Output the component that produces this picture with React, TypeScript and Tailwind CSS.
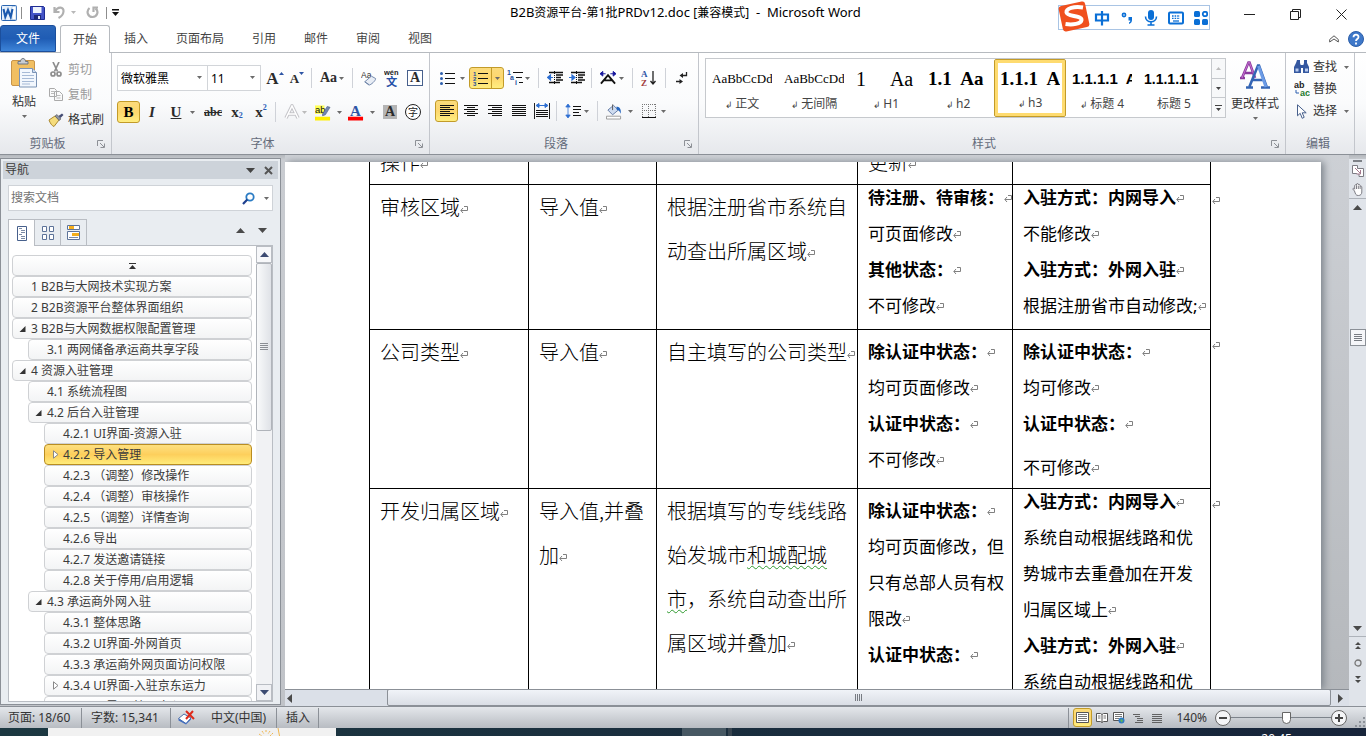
import React from "react";

const UI = "font-['Noto_Sans','Noto_Sans_CJK_SC',sans-serif]";
const SERIF = "font-['Liberation_Serif',serif]";

/* ---------- small shared parts ---------- */

function Caret({ className = "text-[#6b6b6b]" }: { className?: string }) {
  return (
    <svg width="5" height="3" viewBox="0 0 5 3" className={`shrink-0 ${className}`}>
      <path d="M0 0h5L2.500 3z" fill="currentColor" />
    </svg>
  );
}

function Btn({ label, className, children }: { label: string; className: string; children: React.ReactNode }) {
  return (
    <button type="button" aria-label={label} className={`flex shrink-0 items-center justify-center ${className}`}>
      {children}
    </button>
  );
}

function Sep({ className = "" }: { className?: string }) {
  return <span className={`h-5 w-px shrink-0 bg-[#cfd2d8] ${className}`} />;
}

function Group({ label, className, children, launcher = true }: { label: string; className: string; children: React.ReactNode; launcher?: boolean }) {
  return (
    <section aria-label={label} className={`flex flex-col border-r border-[#c3c6cc] ${className}`}>
      <div className="h-[81px]">{children}</div>
      <div className="flex h-5 items-center pr-1 text-[#646b7b]">
        <span className="flex-1 text-center">{label}</span>
        {launcher && (
          <Btn label={`${label}设置`} className="h-3 w-3">
            <svg width="8" height="8" viewBox="0 0 8 8" fill="none" stroke="#8d9096">
              <path d="M.5 6V.5H6M3 3l4 4M7.500 3.500v4h-4" />
            </svg>
          </Btn>
        )}
      </div>
    </section>
  );
}

const ACTIVE = "rounded-[3px] border border-[#c29b29] bg-linear-to-b from-[#fbdb7c] via-[#fdd76e] to-[#ffee80]";

function Rows({ rows, width = 16, color = "#111" }: { rows: [number, number][]; width?: number; color?: string }) {
  return (
    <svg width={width} height="14" viewBox={`0 0 ${width} 14`} shapeRendering="crispEdges">
      {rows.map(([x, w], i) => (
        <rect key={i} x={x} y={1 + i * 2} width={w} height="1" fill={color} />
      ))}
    </svg>
  );
}

/* ---------- title bar ---------- */

function WordLogo() {
  return (
    <svg width="16" height="16" viewBox="0 0 16 16">
      <rect x=".5" y=".5" width="15" height="15" rx="1" fill="#e6f0fb" stroke="#2b66b1" />
      <path d="M11 1.500h4v13h-4z" fill="#fff" stroke="#9bbce3" strokeWidth=".6" />
      <path d="M2.500 4l1.800 8L7 5l2.700 7L11.500 4" fill="none" stroke="#1c5aae" strokeWidth="2.100" />
    </svg>
  );
}

function TitleBar() {
  return (
    <header className="relative flex h-[25px] shrink-0 items-center">
      <div className="flex items-center">
        <span className="pl-px"><WordLogo /></span>
        <span className="ml-1 h-3 w-px bg-[#8d8d8d]" />
        <Btn label="保存" className="ml-[7px] h-4 w-4">
          <svg width="15" height="14" viewBox="0 0 15 14">
            <path d="M.5.5h13l1 1v12H.5z" fill="#4454c7" stroke="#1f2c92" />
            <path d="M3 1h8.500v6H3z" fill="#eef3fd" />
            <path d="M4 9h7v4.500H4z" fill="#1d2875" />
            <path d="M8 10h2v3H8z" fill="#dfe4f5" />
          </svg>
        </Btn>
        <Btn label="撤消" className="ml-2 h-4 w-3">
          <svg width="12" height="13" viewBox="0 0 12 13" fill="none" stroke="#b0b0b0" strokeWidth="2.200">
            <path d="M1.500 1v5h5M2 5.500C5-.5 11 1 10.500 5.500c-.3 3-2 5-5 6.500" />
          </svg>
        </Btn>
        <span className="ml-[6px]"><Caret className="text-[#b8b8b8]" /></span>
        <Btn label="重复" className="ml-2 h-4 w-4">
          <svg width="13" height="13" viewBox="0 0 13 13" fill="none" stroke="#b0b0b0" strokeWidth="2.200">
            <path d="M3.500 2C0 5 1.500 11 6.500 11S13 5 9.500 2.500M7.500 6V1.500H12" />
          </svg>
        </Btn>
        <span className="ml-1.5 h-3 w-px bg-[#8d8d8d]" />
        <Btn label="自定义快速访问工具栏" className="ml-1 h-4 w-2">
          <svg width="7" height="7" viewBox="0 0 7 7"><path d="M0 0h7v1.500H0zM0 3h7L3.500 7z" fill="#111" /></svg>
        </Btn>
      </div>
      <h1 className="flex-1 whitespace-pre pl-[391px] text-[13px] text-black">
        B2B<span className="text-xs">资源平台</span>-<span className="text-xs">第1批</span>PRDv12.doc <span className="text-xs">[兼容模式]</span>  -  Microsoft Word
      </h1>
      <div className="absolute top-[5px] right-[156px] flex h-[25px] w-[152px] items-center border border-[#a9c4e4] bg-white pl-[35px] text-[#0a6fd6]">
        <svg className="absolute -top-[5px] -left-px" width="32" height="31" viewBox="0 0 32 31">
          <rect x="2.500" y="2.500" width="27" height="26" rx="3" fill="#f0501e" transform="rotate(-12 16 15.500)" />
          <path d="M25 6.500C16 5 8 7.500 8.500 11.500c.5 4 15.500 3 15 7.500-.4 4-9 5-16 4" fill="none" stroke="#fff" strokeWidth="4" />
        </svg>
        <svg width="16" height="16" viewBox="0 0 16 16" fill="none" stroke="currentColor" strokeWidth="2.200"><path d="M2 4.500h12v6H2zM8 1v14.500" /></svg>
        <svg className="ml-2.5" width="14" height="14" viewBox="0 0 14 14" fill="currentColor"><circle cx="4" cy="4" r="1.600" fill="none" stroke="currentColor" strokeWidth="1.600" /><path d="M8.500 6h3.500v3c0 2-1 3-3 4v-1.500c1-.6 1.300-1 1.300-2H8.500z" /></svg>
        <svg className="ml-2.5" width="14" height="16" viewBox="0 0 14 16" fill="currentColor"><rect x="4" y="0" width="6" height="10" rx="3" /><path d="M1.500 6.500c0 7 11 7 11 0M7 11v4M3.500 15h7" fill="none" stroke="currentColor" strokeWidth="1.600" /></svg>
        <svg className="ml-2.5" width="16" height="14" viewBox="0 0 16 14" fill="none" stroke="currentColor"><rect x="1" y="1.500" width="14" height="11" rx="1" strokeWidth="2" /><path d="M4 5h8M4 7.300h8" strokeWidth="1.300" strokeDasharray="1.600 1" /><path d="M5 10h6" strokeWidth="1.300" /></svg>
        <svg className="ml-2.5" width="14" height="14" viewBox="0 0 14 14" fill="currentColor"><rect width="6" height="6" rx="1.500" /><rect y="8" width="6" height="6" rx="1.500" /><rect x="8" y="8" width="6" height="6" rx="1.500" /><rect x="8.800" y=".8" width="4.400" height="4.400" rx="2" fill="none" stroke="currentColor" strokeWidth="1.800" /></svg>
      </div>
      <Btn label="最小化" className="mt-1 h-5 w-[46px]"><svg width="11" height="11" viewBox="0 0 11 11"><path d="M0 5.500h11" stroke="#222" /></svg></Btn>
      <Btn label="还原" className="mt-1 h-5 w-[46px]"><svg width="11" height="11" viewBox="0 0 11 11" fill="none" stroke="#222"><path d="M.5 2.500h8v8h-8zM2.500 2.500v-2h8v8h-2" /></svg></Btn>
      <Btn label="关闭" className="mt-1 mr-[2px] h-5 w-[46px]"><svg width="11" height="11" viewBox="0 0 11 11" stroke="#222"><path d="M.5.5l10 10M10.500.5l-10 10" /></svg></Btn>
    </header>
  );
}

function TabBar() {
  return (
    <nav aria-label="功能区" className="flex h-7 shrink-0 items-stretch border-b border-[#b6babf] text-[#444]">
      <button type="button" className="w-14 rounded-t-[3px] border border-[#1c4f9c] bg-linear-to-b from-[#2a66b9] via-[#1f5cb4] to-[#3d84d8] text-white">文件</button>
      <button type="button" className="relative -mb-px ml-1 rounded-t-[3px] border border-b-0 border-[#b6babf] bg-white px-3">开始</button>
      {["插入", "页面布局", "引用", "邮件", "审阅", "视图"].map((t) => (
        <button type="button" key={t} className="px-3.5">{t}</button>
      ))}
      <span className="flex-1" />
      <Btn label="折叠功能区" className="w-5"><svg width="10" height="8" viewBox="0 0 10 8" fill="#fff" stroke="#555"><path d="M5 .8L9.300 4.500v2.500L5 4 .7 7V4.500z" /></svg></Btn>
      <Btn label="帮助" className="mr-0.5 ml-1 w-4">
        <svg width="16" height="16" viewBox="0 0 16 16"><circle cx="8" cy="8" r="7.500" fill="#3e78c9" stroke="#2c5ea8" /><path d="M5.500 6.200c0-3.300 5-3.200 5-.3C10.500 8 8 8 8 10M8 11.500v2" fill="none" stroke="#fff" strokeWidth="1.800" /></svg>
      </Btn>
    </nav>
  );
}

/* ---------- ribbon ---------- */

function ClipboardGroup() {
  return (
    <Group label="剪贴板" className="w-28">
      <div className="flex">
        <button type="button" className="flex w-12 flex-col items-center pt-1 text-[#333]">
          <svg width="28" height="32" viewBox="0 0 28 32">
            <rect x="1.500" y="3.500" width="23" height="25" rx="1.500" fill="#f1bf62" stroke="#c8954a" />
            <path d="M8 7V4.500h2.500C10.500.5 15.500.5 15.500 4.500H18V7z" fill="#c9cdd3" stroke="#6f7680" />
            <path d="M9.500 11.500h13l4 4v14.500h-17z" fill="#f2f7fd" stroke="#7b93b5" />
            <path d="M22.500 11.500v4h4" fill="#c9daf0" stroke="#7b93b5" />
            <path d="M12 15.500h8M12 18.500h12M12 21.500h12M12 24.500h12M12 27h8" stroke="#a6bad6" />
          </svg>
          <span className="mt-1 leading-[18px]">粘贴</span>
          <span className="mt-1"><Caret /></span>
        </button>
        <div className="flex flex-col pt-1 text-[#9a9a9a]">
          <button type="button" className="flex h-[25px] items-center gap-1">
            <svg width="16" height="15" viewBox="0 0 16 15" fill="none" stroke="#8d8d8d" strokeWidth="1.700"><path d="M5 0l4.500 9.500M11 0L6.500 9.500" /><circle cx="5" cy="12" r="2" /><circle cx="11" cy="12" r="2" /></svg>
            剪切
          </button>
          <button type="button" className="flex h-[25px] items-center gap-1">
            <svg width="16" height="13" viewBox="0 0 16 13" fill="#fafafa" stroke="#aaa"><path d="M1.500.5h5l2 2v6h-7zM6.500 3.500h5l3 3v6h-8z" /><path d="M3 3.500h3M3 5.500h3M8.500 7.500h4M8.500 10h4" stroke="#bbb" /></svg>
            复制
          </button>
          <button type="button" className="flex h-[25px] items-center gap-1 text-[#333]">
            <svg width="16" height="14" viewBox="0 0 16 14"><path d="M1 7l6-4 4 4-5 6.500C4 13 2 10 1 7z" fill="#f5dc7c" stroke="#a98830" /><path d="M7 3l2-1.500 4 4.500-2 1.500z" fill="#8b93a5" stroke="#555" strokeWidth=".6" /><path d="M10.500 3L14 .5 15.500 2l-3 3z" fill="#444c74" /></svg>
            格式刷
          </button>
        </div>
      </div>
    </Group>
  );
}

function FontGroup() {
  const glyph = `${SERIF} font-bold leading-none text-[#2b2b2b]`;
  return (
    <Group label="字体" className="w-[318px]">
      <div className="flex h-[38px] items-end pl-[5px]">
        <div className="relative h-[26px] w-[91px]">
          <input aria-label="字体名称" defaultValue="微软雅黑" className="h-full w-full border border-[#d2d5d9] bg-white pl-[3px] text-black" />
          <span className="pointer-events-none absolute top-[11px] right-1.5"><Caret /></span>
        </div>
        <div className="relative -ml-px h-[26px] w-[54px]">
          <input aria-label="字号" defaultValue="11" className="h-full w-full border border-[#d2d5d9] bg-white pl-[3px] text-black" />
          <span className="pointer-events-none absolute top-[11px] right-1.5"><Caret /></span>
        </div>
        <div className="flex h-[26px] items-center">
          <Btn label="增大字体" className={`ml-1 h-6 w-5 text-[17px] ${glyph}`}>A<svg className="mb-2.5" width="5" height="3" viewBox="0 0 5 3"><path d="M0 3h5L2.500 0z" fill="#2d55a5" /></svg></Btn>
          <Btn label="缩小字体" className={`ml-1 h-6 w-4 text-[13px] ${glyph}`}>A<svg className="mb-2.5" width="5" height="3" viewBox="0 0 5 3"><path d="M0 0h5L2.500 3z" fill="#2d55a5" /></svg></Btn>
          <Sep className="ml-1.5" />
          <Btn label="更改大小写" className={`ml-2 h-6 w-6 gap-0.5 text-[14px] ${glyph}`}>Aa<Caret /></Btn>
          <Sep className="ml-2" />
          <Btn label="清除格式" className="ml-2 h-6 w-4">
            <svg width="17" height="17" viewBox="0 0 17 17"><text x="0" y="8" fontSize="9" fontFamily="Liberation Sans" fill="#333">Aa</text><path d="M4 12l7-6 4.500 2.500c.5 2-5 7-7 7z" fill="#e8edf5" stroke="#6d83a8" /><path d="M4 12l4.500 3" stroke="#6d83a8" /></svg>
          </Btn>
          <Btn label="拼音指南" className="ml-[7px] h-6 w-4">
            <svg width="17" height="18" viewBox="0 0 17 18"><text x="0" y="6" fontSize="8" fontWeight="bold" fontFamily="Liberation Sans" fill="#222">wén</text><text x="2" y="17" fontSize="12" fontWeight="bold" fontFamily="Noto Sans CJK SC" fill="#2450a8">文</text></svg>
          </Btn>
          <Btn label="字符边框" className={`ml-[7px] h-4 w-4 border border-[#47608c] bg-white text-[14px] ${glyph}`}>A</Btn>
        </div>
      </div>
      <div className="flex h-[38px] items-center pl-[5px] pt-1">
        <Btn label="加粗" className={`h-[22px] w-[23px] text-[15px] ${ACTIVE} ${SERIF} font-bold leading-none text-black`}>B</Btn>
        <Btn label="倾斜" className={`ml-1 h-5 w-4 text-[15px] italic ${glyph}`}>I</Btn>
        <Btn label="下划线" className={`ml-1.5 h-5 w-5 text-[15px] underline ${glyph}`}>U</Btn>
        <span className="ml-1"><Caret /></span>
        <Btn label="删除线" className={`ml-2 h-5 w-5 text-[12px] line-through ${glyph}`}>abc</Btn>
        <Btn label="下标" className={`ml-1 h-5 w-5 text-[15px] ${glyph}`}>x<span className="mt-2 text-[8px] leading-none text-[#2a5cb8]">2</span></Btn>
        <Btn label="上标" className={`ml-1 h-5 w-5 text-[15px] ${glyph}`}>x<span className="mb-2 text-[8px] leading-none text-[#2a5cb8]">2</span></Btn>
        <Sep className="ml-1" />
        <Btn label="文本效果" className="ml-2 h-5 w-4"><svg width="16" height="16" viewBox="0 0 16 16"><path d="M2 14L8 2l6 12M4.500 10h7" fill="none" stroke="#c4c4c8" strokeWidth="3.500" /><path d="M2 14L8 2l6 12M4.500 10h7" fill="none" stroke="#fff" strokeWidth="1.500" /></svg></Btn>
        <span className="ml-0.5"><Caret className="text-[#bbb]" /></span>
        <Btn label="突出显示" className="ml-2 h-5 w-4"><svg width="17" height="17" viewBox="0 0 17 17"><path d="M0 1h10v9H0z" fill="#ffff55" /><text x="0" y="9" fontSize="10" fontFamily="Liberation Sans" fill="#111">ab</text><path d="M8 10l5-8 3 1-5 8-3 1z" fill="#7186b3" stroke="#44557c" strokeWidth=".6" /><path d="M0 13h16v4H0z" fill="#ffee00" /></svg></Btn>
        <span className="ml-1.5"><Caret /></span>
        <Btn label="字体颜色" className="ml-1.5 h-5 w-4"><svg width="17" height="17" viewBox="0 0 17 17"><text x="2" y="12" fontSize="16" fontWeight="bold" fontFamily="Liberation Serif" fill="#2d55a5">A</text><path d="M0 13h16v4H0z" fill="#f00" /></svg></Btn>
        <span className="ml-1.5"><Caret /></span>
        <Btn label="字符底纹" className={`ml-2 h-3.5 w-3.5 bg-[#b5b5b5] text-[14px] ${glyph}`}>A</Btn>
        <Btn label="带圈字符" className="ml-2 h-4 w-4 rounded-full border border-[#222] bg-white text-[10px] leading-none text-[#222]">字</Btn>
      </div>
    </Group>
  );
}

function ListIcon({ kind }: { kind: "bullet" | "number" }) {
  return (
    <svg width="15" height="15" viewBox="0 0 15 15">
      <path d="M5 2.500h10M5 7.500h10M5 12.500h10" stroke="#111" shapeRendering="crispEdges" />
      {kind === "bullet"
        ? [2.5, 7.5, 12.5].map((y) => <circle key={y} cx="1.500" cy={y} r="1.500" fill="#2d5fae" />)
        : [4.5, 9.5, 14.5].map((y, i) => <text key={y} x="0" y={y} fontSize="6" fontWeight="bold" fontFamily="Liberation Sans" fill="#24509c">{i + 1}</text>)}
    </svg>
  );
}

function IndentIcon({ out }: { out?: boolean }) {
  return (
    <svg width="16" height="14" viewBox="0 0 16 14">
      <path d="M2 1.500h14M9 4h7M9 6.500h5M9 9h7M2 11.500h11" stroke="#111" strokeWidth="1.300" />
      <path d="M7.500 0v14" stroke="#111" strokeDasharray="1 1" />
      <path d={out ? "M.5 6.500L3.500 4v5zM3 6.500h3" : "M6 6.500L3 4v5zM0 6.500h4"} fill="#2d6fd2" stroke="#2d6fd2" strokeWidth="1.200" />
    </svg>
  );
}

function ParagraphGroup() {
  const full: [number, number] = [1, 14];
  return (
    <Group label="段落" className="w-[269px]">
      <div className="flex h-[37px] items-end pl-1">
        <div className="flex h-6 items-center">
          <Btn label="项目符号" className="ml-[3px] h-5 w-5"><ListIcon kind="bullet" /></Btn>
          <span className="ml-[3px]"><Caret /></span>
          <div className={`ml-1 flex h-[22px] w-[35px] items-center ${ACTIVE}`}>
            <Btn label="编号" className="h-full w-[22px] border-r border-[#c29b29]"><ListIcon kind="number" /></Btn>
            <Btn label="编号库" className="h-full w-[11px]"><Caret /></Btn>
          </div>
          <Btn label="多级列表" className="ml-[3px] h-5 w-4"><svg width="16" height="16" viewBox="0 0 16 16"><path d="M6 2.500h10M9 7.500h6M12 12.500h4" stroke="#111" /><g fontSize="7" fontWeight="bold" fontFamily="Liberation Sans" fill="#24509c"><text x="0" y="5">1</text><text x="3" y="10">a</text><text x="8" y="15">i</text></g></svg></Btn>
          <span className="ml-0.5"><Caret /></span>
          <Sep className="ml-2" />
          <Btn label="减少缩进量" className="ml-2 h-5 w-4"><IndentIcon out /></Btn>
          <Btn label="增加缩进量" className="ml-1.5 h-5 w-4"><IndentIcon /></Btn>
          <Sep className="ml-1.5" />
          <Btn label="中文版式" className="ml-2 h-5 w-4"><svg width="17" height="14" viewBox="0 0 17 14"><path d="M1 13L8.500 4l7.500 9M4.500 9.500h8" fill="none" stroke="#111" strokeWidth="2" /><path d="M0 2.500L3 0v5zM17 2.500L14 0v5zM2 2.500h4M11 2.500h4" fill="#14149c" stroke="#14149c" /></svg></Btn>
          <span className="ml-[3px]"><Caret /></span>
          <Sep className="ml-2" />
          <Btn label="排序" className="ml-2 h-5 w-4"><svg width="16" height="17" viewBox="0 0 16 17"><g fontSize="9" fontWeight="bold" fontFamily="Liberation Serif"><text x="0" y="7" fill="#2d55a5">A</text><text x="0" y="16" fill="#a23c3c">Z</text></g><path d="M12 1v13M9.500 11l2.500 3 2.500-3" fill="none" stroke="#222" strokeWidth="1.300" /></svg></Btn>
          <Sep className="ml-2" />
          <Btn label="显示编辑标记" className="ml-2 h-5 w-4"><svg width="12" height="14" viewBox="0 0 12 14"><path d="M10.500 1v3.500H6M0 10.500h4" fill="none" stroke="#222" strokeWidth="1.300" /><path d="M3.500 4.500L7 2v5zM7 10.500L3.500 8v5z" fill="#222" /></svg></Btn>
        </div>
      </div>
      <div className="flex h-10 items-center pl-[5px] pt-0.5">
        <Btn label="左对齐" className={`h-[22px] w-[23px] ${ACTIVE}`}><Rows rows={[[1, 14], [1, 10], [1, 14], [1, 10], [1, 14], [1, 10]]} /></Btn>
        <Btn label="居中" className="ml-[3px] h-5 w-5"><Rows rows={[full, [4, 8], full, [4, 8], full, [4, 8]]} /></Btn>
        <Btn label="右对齐" className="ml-1 h-5 w-5"><Rows rows={[full, [5, 10], full, [5, 10], full, [5, 10]]} /></Btn>
        <Btn label="两端对齐" className="ml-1 h-5 w-5"><Rows rows={[full, full, full, full, full, full]} /></Btn>
        <Btn label="分散对齐" className="ml-[3px] h-5 w-5"><svg width="16" height="16" viewBox="0 0 16 16"><path d="M.5 0v16M15.500 0v16" stroke="#222" /><path d="M3 2.500h10M2 2.500L5 .5v4zM14 2.500L11 .5v4z" fill="#2d6fd2" stroke="#2d6fd2" /><path d="M2 7.500h12M2 9.500h12M2 11.500h12M2 13.500h12" stroke="#111" /></svg></Btn>
        <Sep className="ml-1" />
        <Btn label="行距" className="ml-2 h-5 w-4"><svg width="16" height="16" viewBox="0 0 16 16"><path d="M3 2v12M3 1L.8 4h4.400zM3 15l-2.200-3h4.400z" fill="#2d6fd2" stroke="#2d6fd2" strokeWidth=".8" /><path d="M8 3.500h8M8 6.500h8M8 9.500h6M8 12.500h8" stroke="#111" /></svg></Btn>
        <span className="ml-[3px]"><Caret /></span>
        <Sep className="ml-2" />
        <Btn label="底纹" className="ml-2 h-5 w-4"><svg width="17" height="17" viewBox="0 0 17 17"><path d="M2 7l6-5 5 5-6 5z" fill="#cfdcf0" stroke="#6079a3" /><path d="M7 1v6" stroke="#555" /><path d="M11 3.500c4-1 5.500 4 4.500 7.500-1-3-2-4-4-4z" fill="#2566c0" /><path d="M.5 13.500h15v3H.5z" fill="#fff" stroke="#999" /></svg></Btn>
        <span className="ml-1.5"><Caret /></span>
        <Btn label="边框" className="ml-2 h-5 w-4"><svg width="14" height="14" viewBox="0 0 14 14" shapeRendering="crispEdges"><path d="M.5 0v13M13.500 0v13M6.500 0v13M0 .5h14M0 6.500h14" stroke="#777" strokeDasharray="1 1" /><path d="M0 13.500h14" stroke="#111" /></svg></Btn>
        <span className="ml-1"><Caret /></span>
      </div>
    </Group>
  );
}

function StyleItem({ sample, name, font, mark = true, active }: { sample: string; name: string; font: string; mark?: boolean; active?: boolean }) {
  return (
    <button type="button" className={`flex h-full w-18 shrink-0 flex-col items-stretch text-[#444] ${active ? "rounded-[2px] border border-[#c29b29] bg-white shadow-[inset_0_0_0_3px_#fedb70]" : ""}`}>
      <span className={`overflow-hidden whitespace-pre text-left leading-[26px] text-black ${font} ${active ? "mx-[5px] mt-[6px]" : "mx-1.5 mt-[7px]"}`}>{sample}</span>
      <span className="text-center leading-6">{mark && <span className="text-[9px]">↲ </span>}{name}</span>
    </button>
  );
}

function StylesGroup() {
  return (
    <Group label="样式" className="w-[587px]">
      <div className="flex pl-[6px]">
        <div className="mt-[5px] flex h-[60px] w-[521px] border border-[#c6c9cd] bg-white">
          <div className="flex flex-1 overflow-hidden">
            <StyleItem sample="AaBbCcDd" name="正文" font={`${SERIF} text-[13px]`} />
            <StyleItem sample="AaBbCcDd" name="无间隔" font={`${SERIF} text-[13px]`} />
            <StyleItem sample="1     Aa" name="H1" font={`${SERIF} text-[20px]`} />
            <StyleItem sample="1.1  Aa" name="h2" font={`${SERIF} text-[19px] font-bold`} />
            <StyleItem sample="1.1.1  Aa" name="h3" font={`${SERIF} text-[19px] font-bold`} active />
            <StyleItem sample="1.1.1.1  Aa" name="标题 4" font="font-['Liberation_Sans',sans-serif] text-[15px] font-bold" />
            <StyleItem sample="1.1.1.1.1" name="标题 5" font="font-['Liberation_Sans',sans-serif] text-[14px] font-bold" mark={false} />
          </div>
          <div className="flex w-[14px] flex-col divide-y divide-[#c6c9cd] border-l border-[#c6c9cd] bg-[#f7f8f9]">
            <Btn label="上一行" className="flex-1"><span className="rotate-180"><Caret className="text-[#bbb]" /></span></Btn>
            <Btn label="下一行" className="flex-1"><Caret className="text-[#444]" /></Btn>
            <Btn label="其他" className="flex-1"><svg width="7" height="6" viewBox="0 0 7 6"><path d="M0 0h7v1H0zM1 3h5L3.500 6z" fill="#444" /></svg></Btn>
          </div>
        </div>
        <button type="button" className="flex w-[58px] flex-col items-center pt-[7px] text-[#333]">
          <svg width="30" height="30" viewBox="0 0 30 30" fill="none">
            <path d="M2 18L8.500 2.500h1L15 18M4.500 13h9M0 18h5" stroke="#8b3a9e" strokeWidth="2.600" />
            <path d="M2 18L8.500 2.500h1L15 18" stroke="#c56fd0" strokeWidth="1" />
            <path d="M9.500 26.500L18 5.500h1l7.500 21M12.500 20h12M6 27.500h7M21 27.500h9" stroke="#3364b4" strokeWidth="2.600" />
            <path d="M18.500 6l7.500 21" stroke="#6b9be6" strokeWidth="3" />
          </svg>
          <span className="mt-[5px] leading-[18px]">更改样式</span>
          <span className="mt-1"><Caret /></span>
        </button>
      </div>
    </Group>
  );
}

function EditGroup() {
  return (
    <Group label="编辑" className="w-[69px]" launcher={false}>
      <div className="flex flex-col pt-[3px] pl-2 text-[#333]">
        <button type="button" className="flex h-[22px] items-center gap-[3px] whitespace-nowrap">
          <svg width="16" height="14" viewBox="0 0 16 14" fill="#3558a0"><path d="M3 0h3v3l1 3v7H0V7l2-4zM10 0h3v3l2 4v6H9V6l1-3zM6.500 5h3v3h-3z" /><path d="M1.500 8.500h3v3h-3zM11 8.500h3v3h-3z" fill="#b9cbee" /></svg>
          查找<span className="ml-1"><Caret /></span>
        </button>
        <button type="button" className="flex h-[22px] items-center gap-[3px]">
          <svg width="16" height="16" viewBox="0 0 16 16" fontFamily="Liberation Sans" fontWeight="bold"><text x="0" y="7" fontSize="9" fill="#222">ab</text><text x="6" y="15" fontSize="9" fill="#1e7a2c">ac</text><path d="M2 9v3h3" fill="none" stroke="#2d5fae" /></svg>
          替换
        </button>
        <button type="button" className="flex h-[22px] items-center gap-[3px] whitespace-nowrap">
          <svg width="16" height="15" viewBox="0 0 16 15"><path d="M3.500.8v11l2.700-2.500 2 5 2-1-2-4.500h4z" fill="#fff" stroke="#47608c" /></svg>
          选择<span className="ml-1"><Caret /></span>
        </button>
      </div>
    </Group>
  );
}

/* ---------- navigation pane ---------- */

type Node = { text: string; level: 0 | 1 | 2; open?: boolean; closed?: boolean; selected?: boolean };

const NODES: Node[] = [
  { text: "1 B2B与大网技术实现方案", level: 0 },
  { text: "2 B2B资源平台整体界面组织", level: 0 },
  { text: "3 B2B与大网数据权限配置管理", level: 0, open: true },
  { text: "3.1 两网储备承运商共享字段", level: 1 },
  { text: "4 资源入驻管理", level: 0, open: true },
  { text: "4.1 系统流程图", level: 1 },
  { text: "4.2 后台入驻管理", level: 1, open: true },
  { text: "4.2.1 UI界面-资源入驻", level: 2 },
  { text: "4.2.2 导入管理", level: 2, closed: true, selected: true },
  { text: "4.2.3 （调整）修改操作", level: 2 },
  { text: "4.2.4 （调整）审核操作", level: 2 },
  { text: "4.2.5 （调整）详情查询", level: 2 },
  { text: "4.2.6 导出", level: 2 },
  { text: "4.2.7 发送邀请链接", level: 2 },
  { text: "4.2.8 关于停用/启用逻辑", level: 2 },
  { text: "4.3 承运商外网入驻", level: 1, open: true },
  { text: "4.3.1 整体思路", level: 2 },
  { text: "4.3.2 UI界面-外网首页", level: 2 },
  { text: "4.3.3 承运商外网页面访问权限", level: 2 },
  { text: "4.3.4 UI界面-入驻京东运力", level: 2, closed: true },
  { text: "4.3.5 UI界面-管理中心", level: 2 },
];

const INDENT = ["ml-0", "ml-4", "ml-8"];

function NavPane() {
  return (
    <aside className="flex w-[281px] shrink-0 flex-col border border-[#8b9097] bg-[#e9edf1] px-0.5 pt-0.5 pb-0.5 text-[#3b3b3b]">
      <div className="flex h-[18px] shrink-0 items-center bg-[#cdd3da] pl-0.5">
        <h2 className="flex-1">导航</h2>
        <Btn label="窗格选项" className="h-4 w-4"><svg width="9" height="5" viewBox="0 0 9 5"><path d="M0 0h9L4.500 5z" fill="#444" /></svg></Btn>
        <Btn label="关闭窗格" className="h-4 w-5"><svg width="9" height="9" viewBox="0 0 9 9"><path d="M1 1l7 7M8 1L1 8" stroke="#555" strokeWidth="2" /></svg></Btn>
      </div>
      <div className="mx-[5px] mt-1.5 flex h-[26px] shrink-0 items-center border border-[#cfd3d8] bg-white">
        <input aria-label="搜索文档" placeholder="搜索文档" className="min-w-0 flex-1 pl-0.5 placeholder:text-[#737373]" />
        <Btn label="搜索" className="mr-1 h-5 w-4"><svg width="13" height="13" viewBox="0 0 13 13" fill="none"><circle cx="8" cy="5" r="3.700" stroke="#2b7cc4" strokeWidth="1.800" /><path d="M5.300 7.500L1 12" stroke="#1e3f8e" strokeWidth="2.200" /></svg></Btn>
        <Btn label="搜索选项" className="h-5 w-3"><Caret /></Btn>
      </div>
      <div className="mx-[5px] mt-2 flex h-[26px] shrink-0 items-stretch">
        <Btn label="浏览标题" className="relative z-10 -mb-px w-[27px] border border-b-0 border-[#b9bdc3] bg-white"><svg width="10" height="15" viewBox="0 0 10 15"><path d="M.5.5h9v14h-9z" fill="#fff" stroke="#47608c" /><path d="M2 2.500h3M4 4.500h4M4 6.500h4M2 8.500h3M4 10.500h4M4 12.500h4" stroke="#7b8aa5" /></svg></Btn>
        <Btn label="浏览页面" className="w-[26px] border-t border-r border-[#b9bdc3]"><svg width="12" height="14" viewBox="0 0 12 14" fill="#fff" stroke="#5d7399"><path d="M.5.5h4v5h-4zM7.500.5h4v5h-4zM.5 8.500h4v5h-4zM7.500 8.500h4v5h-4z" /></svg></Btn>
        <Btn label="浏览搜索结果" className="w-[26px] border-t border-r border-[#b9bdc3]"><svg width="13" height="15" viewBox="0 0 13 15"><path d="M.5.500h12v4h-12zM.5 6.500h12v8h-12z" fill="#fff" stroke="#5d7399" /><path d="M2 1h5v3H2zM5 8h7v3H5z" fill="#f5ae1c" /><path d="M2 12.500h9" stroke="#7b8aa5" /></svg></Btn>
        <span className="flex-1" />
        <Btn label="上一标题" className="w-[22px] pb-1"><svg width="9" height="5" viewBox="0 0 9 5"><path d="M0 5h9L4.500 0z" fill="#4a4a4a" /></svg></Btn>
        <Btn label="下一标题" className="w-[22px] pb-1"><svg width="9" height="5" viewBox="0 0 9 5"><path d="M0 0h9L4.500 5z" fill="#4a4a4a" /></svg></Btn>
      </div>
      <div className="mx-[5px] flex min-h-0 flex-1 border border-[#b9bdc3] bg-white">
        <ul className="min-w-0 flex-1 overflow-hidden pt-[9px] pr-1 pl-[3px]">
          <li>
            <button type="button" aria-label="文档开头" className="flex h-[21px] w-full items-center justify-center rounded-[4px] border border-[#cfd1d4] bg-linear-to-b from-white to-[#f3f4f5]">
              <svg width="7" height="6" viewBox="0 0 7 6"><path d="M0 0h7v1H0zM0 6h7L3.500 2z" fill="#333" /></svg>
            </button>
          </li>
          {NODES.map((n) => (
            <li key={n.text} className={INDENT[n.level]}>
              <button type="button" className={`flex h-[21px] w-full items-center overflow-hidden rounded-[4px] border pl-1.5 whitespace-nowrap ${n.selected ? "border-[#b98d22] bg-linear-to-b from-[#fde080] via-[#fdcf5c] to-[#ffec7a]" : "border-[#cfd1d4] bg-linear-to-b from-white to-[#f3f4f5]"}`}>
                <span className="w-3 shrink-0">
                  {n.open && <svg width="7" height="6" viewBox="0 0 7 6"><path d="M6.500 0v6h-6z" fill="#333" /></svg>}
                  {n.closed && <svg className="ml-0.5" width="6" height="9" viewBox="0 0 6 9"><path d="M.5.800v7.400L5 4.500z" fill="#fff" stroke="#888" /></svg>}
                </span>
                {n.text}
              </button>
            </li>
          ))}
        </ul>
        <div className="flex w-4 shrink-0 flex-col bg-[#f1f2f4]">
          <Btn label="向上滚动" className="h-[17px] border border-[#b9bdc3] bg-[#f7f8fa]"><svg width="9" height="5" viewBox="0 0 9 5"><path d="M0 5h9L4.500 0z" fill="#3c4b72" /></svg></Btn>
          <div className="flex h-[168px] items-center justify-center rounded-[2px] border border-[#b0b4ba] bg-linear-to-r from-[#f9fafb] to-[#dfe2e7]">
            <svg width="8" height="8" viewBox="0 0 8 8"><path d="M0 .5h8M0 2.500h8M0 4.500h8M0 6.500h8" stroke="#8a8e94" /></svg>
          </div>
          <span className="flex-1" />
          <Btn label="向下滚动" className="h-[17px] border border-[#b9bdc3] bg-[#f0f1f4]"><svg width="9" height="5" viewBox="0 0 9 5"><path d="M0 0h9L4.500 5z" fill="#3c4b72" /></svg></Btn>
        </div>
      </div>
    </aside>
  );
}

/* ---------- document ---------- */

function Ret() {
  return (
    <svg className="inline-block" width="8" height="8" viewBox="0 0 8 8" fill="none" stroke="#808080">
      <path d="M4 .5h3.500v4H1M3 2L.800 4.500 3 7" />
    </svg>
  );
}

function Main({ lines }: { lines: React.ReactNode[] }) {
  return (
    <div className="font-['Noto_Sans_CJK_SC',sans-serif] text-[20px] leading-[44px] font-light">
      {lines.map((l, i) => (
        <p key={i}>{l}{i === lines.length - 1 && <Ret />}</p>
      ))}
    </div>
  );
}

type Line = { t: string; b?: boolean; wrap?: boolean; gap?: boolean };

function Notes({ lines, up }: { lines: Line[]; up?: boolean }) {
  return (
    <div className={`text-[17px] leading-9 ${up ? "-mt-[5px]" : "mt-1"}`}>
      {lines.map((l, i) => (
        <p key={i} className={`${l.b ? "font-bold" : ""} ${l.gap ? "mt-2" : ""}`}>
          {l.t}{!l.wrap && <Ret />}
        </p>
      ))}
    </div>
  );
}

function Row({ cells, height }: { cells: React.ReactNode[]; height: string }) {
  return (
    <tr className={height}>
      {cells.map((c, i) => (
        <td key={i} className="border border-black p-0 pl-2.5 align-top">{c}</td>
      ))}
      <td className="p-0 pl-px align-top leading-[32px]"><Ret /></td>
    </tr>
  );
}

const wavy = "underline decoration-[#2f9a2f] decoration-wavy decoration-1 underline-offset-2";

function DocumentTable() {
  return (
    <table className="-mt-[23px] w-[852px] table-fixed border-collapse whitespace-nowrap text-black">
      <colgroup>
        <col className="w-[159px]" /><col className="w-[128px]" /><col className="w-[201px]" /><col className="w-[155px]" /><col className="w-[198px]" /><col className="w-[11px]" />
      </colgroup>
      <tbody>
        <Row height="h-11" cells={[<Main lines={["操作"]} />, null, null, <Main lines={["更新"]} />, null]} />
        <Row height="h-[145px]" cells={[
          <Main lines={["审核区域"]} />,
          <Main lines={["导入值"]} />,
          <Main lines={["根据注册省市系统自", "动查出所属区域"]} />,
          <Notes up lines={[{ t: "待注册、待审核：", b: true }, { t: "可页面修改" }, { t: "其他状态：", b: true }, { t: "不可修改" }]} />,
          <Notes up lines={[{ t: "入驻方式：内网导入", b: true }, { t: "不能修改" }, { t: "入驻方式：外网入驻", b: true }, { t: "根据注册省市自动修改;" }]} />,
        ]} />
        <Row height="h-[159px]" cells={[
          <Main lines={["公司类型"]} />,
          <Main lines={["导入值"]} />,
          <Main lines={["自主填写的公司类型"]} />,
          <Notes lines={[{ t: "除认证中状态：", b: true }, { t: "均可页面修改" }, { t: "认证中状态：", b: true }, { t: "不可修改" }]} />,
          <Notes lines={[{ t: "除认证中状态：", b: true }, { t: "均可修改" }, { t: "认证中状态：", b: true }, { t: "不可修改", gap: true }]} />,
        ]} />
        <Row height="h-[220px]" cells={[
          <Main lines={["开发归属区域"]} />,
          <Main lines={["导入值,并叠", "加"]} />,
          <Main lines={["根据填写的专线线路", <>始发城市<span className={wavy}>和城配城</span></>, <><span className={wavy}>市</span>，系统自动查出所</>, "属区域并叠加"]} />,
          <Notes lines={[{ t: "除认证中状态：", b: true }, { t: "均可页面修改，但", wrap: true }, { t: "只有总部人员有权", wrap: true }, { t: "限改" }, { t: "认证中状态：", b: true }]} />,
          <Notes up lines={[{ t: "入驻方式：内网导入", b: true }, { t: "系统自动根据线路和优", wrap: true }, { t: "势城市去重叠加在开发", wrap: true }, { t: "归属区域上" }, { t: "入驻方式：外网入驻", b: true }, { t: "系统自动根据线路和优", wrap: true }]} />,
        ]} />
      </tbody>
    </table>
  );
}

function VerticalScroll() {
  return (
    <div className="mt-1 flex w-[17px] shrink-0 flex-col items-center bg-[#e0e4ea]">
      <span className="mt-px h-0.5 w-[9px] bg-[#7d8187]" />
      <Btn label="标尺" className="h-[18px] w-4"><svg width="12" height="12" viewBox="0 0 12 12" fill="#fff" stroke="#7c7c84"><path d="M.5.500h5v3h6v8h-4.500v-3H.5z" /><path d="M3 3l5.500 5.500M8.500 5v4h-4" stroke="#a3768c" /></svg></Btn>
      <Btn label="移动手形" className="h-[18px] w-4"><svg width="12" height="13" viewBox="0 0 12 13" fill="#fff" stroke="#7c7c84"><path d="M2.500 8L.7 6c.5-1.200 1.500-.8 2 .2V2.500c.5-1 1.500-1 1.800 0V1c.5-.8 1.500-.8 1.800 0v1.200c.5-1 1.500-.8 1.800 0v1.500c.6-.8 1.700-.6 1.700.3v5c0 2-1 3.500-3.500 3.500S3.500 11 2.500 8z" /><path d="M4.500 3v3M6.300 3v3M8.100 3.500V6" /></svg></Btn>
      <span className="h-px w-full bg-[#aeb3ba]" />
      <Btn label="上滚" className="h-4 w-4"><svg width="9" height="5" viewBox="0 0 9 5"><path d="M0 5h9L4.500 0z" fill="#4a4a4a" /></svg></Btn>
      <span className="h-[114px]" />
      <div className="flex h-[17px] w-4 items-center justify-center border border-[#8b9097] bg-[#f5f6f9]">
        <svg width="8" height="8" viewBox="0 0 8 8"><path d="M0 .5h8M0 2.500h8M0 4.500h8M0 6.500h8" stroke="#777b82" /></svg>
      </div>
      <span className="flex-1" />
      <Btn label="下滚" className="h-4 w-4"><svg width="9" height="5" viewBox="0 0 9 5"><path d="M0 0h9L4.500 5z" fill="#4a4a4a" /></svg></Btn>
      <span className="h-px w-full bg-[#aeb3ba]" />
      <Btn label="前一页" className="h-[17px] w-4"><svg width="6" height="7" viewBox="0 0 6 7"><path d="M0 3h6L3 0zM0 7h6L3 4z" fill="#4a4a4a" /></svg></Btn>
      <Btn label="选择浏览对象" className="h-[17px] w-4"><svg width="8" height="8" viewBox="0 0 8 8"><circle cx="4" cy="4" r="3" fill="none" stroke="#777" strokeWidth="1.300" /></svg></Btn>
      <Btn label="后一页" className="h-[17px] w-4"><svg width="6" height="7" viewBox="0 0 6 7"><path d="M0 0h6L3 3zM0 4h6L3 7z" fill="#4a4a4a" /></svg></Btn>
      <span className="h-[18px]" />
    </div>
  );
}

function DocumentArea() {
  return (
    <div className="flex min-w-0 flex-1">
      <div className="flex min-w-0 flex-1 flex-col">
        <main className="flex min-h-0 flex-1 overflow-hidden bg-linear-to-b from-[#cdd0d5] to-[#b5b8bc] pt-[7px] pr-7">
          <div className="min-w-0 flex-1 overflow-hidden bg-white pl-[84px] shadow-[3px_0_7px_#7e858d]">
            <DocumentTable />
          </div>
        </main>
        <div className="flex h-[17px] shrink-0 items-stretch border-t border-[#8b9097] bg-[#dbe0e8]">
          <Btn label="向左滚动" className="w-2"><svg width="5" height="9" viewBox="0 0 5 9"><path d="M5 0v9L0 4.500z" fill="#4a4a4a" /></svg></Btn>
          <span className="w-[94px]" />
          <div className="-mt-px flex flex-1 items-center justify-center rounded-[2px] border border-[#8b9097] bg-linear-to-b from-[#f0f3f8] to-[#dadee5]">
            <svg width="8" height="7" viewBox="0 0 8 7"><path d="M.5 0v7M2.500 0v7M4.500 0v7M6.500 0v7" stroke="#777b82" /></svg>
          </div>
          <Btn label="向右滚动" className="w-[18px]"><svg width="5" height="9" viewBox="0 0 5 9"><path d="M0 0v9l5-4.500z" fill="#4a4a4a" /></svg></Btn>
        </div>
      </div>
      <VerticalScroll />
    </div>
  );
}

/* ---------- status bar ---------- */

function StatusSep({ className = "" }: { className?: string }) {
  return <span className={`h-5 w-px shrink-0 bg-[#8b9097] ${className}`} />;
}

function StatusBar() {
  return (
    <footer className="flex h-[22px] shrink-0 items-center border-t border-[#8b9097] bg-linear-to-b from-[#e4e7eb] to-[#b8bcc2] whitespace-nowrap text-[#333]">
      <button type="button" className="w-[81px] pl-2 text-left">页面: 18/60</button>
      <StatusSep />
      <button type="button" className="w-[88px] pl-[9px] text-left">字数: 15,341</button>
      <StatusSep />
      <Btn label="校对" className="ml-[7px] w-[17px]"><svg width="17" height="15" viewBox="0 0 17 15"><path d="M.5 8.500L6 4l7 4-5 5.500z" fill="#fff" stroke="#4b6da8" /><path d="M.5 8.500v2L8 14.500l5-5V8l-5 5.500z" fill="#3f6cc0" /><path d="M8 1l8 8M15 1L8 9" stroke="#dd2a1b" strokeWidth="2" /></svg></Btn>
      <button type="button" className="w-[81px] pl-4 text-left">中文(中国)</button>
      <StatusSep />
      <button type="button" className="w-[41px] pl-[9px] text-left">插入</button>
      <StatusSep />
      <span className="flex-1" />
      <StatusSep />
      <Btn label="页面视图" className={`ml-1 h-[19px] w-[19px] ${ACTIVE}`}><svg width="13" height="11" viewBox="0 0 13 11"><path d="M.5.5h12v10H.5z" fill="#fff" stroke="#555" /><path d="M2 2.500h9M2 4.500h9M2 6.500h9M2 8.500h9" stroke="#777" /></svg></Btn>
      <Btn label="阅读版式视图" className="ml-1 h-4 w-3"><svg width="12" height="11" viewBox="0 0 12 11"><path d="M.5 1.500h4L6 2.500l1.500-1h4v8h-4L6 10.500l-1.500-1h-4zM6 2.500v8" fill="#fff" stroke="#555" /><path d="M2 4h2.500M2 6h2.500M7.500 4H10M7.500 6H10" stroke="#777" /></svg></Btn>
      <Btn label="Web 版式视图" className="ml-[5px] h-4 w-3"><svg width="12" height="12" viewBox="0 0 12 12"><path d="M.5.5h10v8H.5z" fill="#fff" stroke="#555" /><path d="M2 2.500h7M2 4.500h7M2 6.500h4" stroke="#777" /><circle cx="8.500" cy="8.500" r="3" fill="#2e79c4" /><path d="M7 8l2-1 1 2-1.500 1.500z" fill="#5eb45b" /></svg></Btn>
      <Btn label="大纲视图" className="ml-[7px] h-4 w-3"><svg width="10" height="10" viewBox="0 0 10 10"><path d="M0 1.500h7M2 3.500h5M4 5.500h6M4 7.500h6M2 9.500h8" stroke="#555" strokeWidth=".9" /></svg></Btn>
      <Btn label="草稿" className="ml-[7px] h-4 w-3"><svg width="10" height="10" viewBox="0 0 10 10"><path d="M0 1.500h10M0 3.500h10M0 5.500h10M0 7.500h10M0 9.500h10" stroke="#555" strokeWidth=".9" /></svg></Btn>
      <button type="button" className="ml-3 w-8 text-right">140%</button>
      <Btn label="缩小" className="ml-2 h-4 w-4 rounded-full border border-[#666] bg-[#f4f5f7]"><svg width="8" height="8" viewBox="0 0 8 8"><path d="M0 4h8" stroke="#444" strokeWidth="2" /></svg></Btn>
      <input type="range" aria-label="缩放" min="0" max="100" defaultValue="56" className="h-4 w-[100px] appearance-none bg-[linear-gradient(#7d838b,#7d838b)] bg-size-[100%_1px] bg-center bg-no-repeat [&::-webkit-slider-thumb]:h-3 [&::-webkit-slider-thumb]:w-[9px] [&::-webkit-slider-thumb]:appearance-none [&::-webkit-slider-thumb]:rounded-b-[5px] [&::-webkit-slider-thumb]:border [&::-webkit-slider-thumb]:border-[#666] [&::-webkit-slider-thumb]:bg-white" />
      <Btn label="放大" className="h-4 w-4 rounded-full border border-[#666] bg-[#f4f5f7]"><svg width="8" height="8" viewBox="0 0 8 8"><path d="M0 4h8M4 0v8" stroke="#444" strokeWidth="2" /></svg></Btn>
      <svg className="ml-2 self-end" width="11" height="11" viewBox="0 0 11 11" fill="#8d9299"><path d="M8 0h2v2H8zM8 4h2v2H8zM4 4h2v2H4zM8 8h2v2H8zM4 8h2v2H4zM0 8h2v2H0z" /></svg>
    </footer>
  );
}

function TaskBar() {
  return (
    <div className="flex h-2 shrink-0 overflow-hidden bg-linear-to-r from-[#1c3841] to-[#17243a]">
      <div className="ml-12 w-[288px] bg-[#f1f1f1]">
        <svg className="ml-[208px]" width="26" height="8" viewBox="0 0 26 8" fill="none" stroke="#f0b64f"><path d="M3 6l3 2M10 2v3M17 5l-3 3M6 3l2 3M14 3l-2 3" strokeDasharray="2 1" /><path d="M22 0l1.500 8" /></svg>
      </div>
      <span className="ml-[346px] w-11 bg-[#475863]" />
      <span className="ml-0.5 w-1 bg-[#37444f]" />
      <span className="flex-1" />
      <span className="mr-[74px] pt-0.5 text-xs leading-[18px] text-white">20:45</span>
    </div>
  );
}

export default function App() {
  return (
    <div className={`flex h-screen flex-col overflow-hidden bg-white text-xs ${UI}`}>
      <TitleBar />
      <TabBar />
      <div className="flex h-[102px] shrink-0 border-b border-[#8b9097] bg-linear-to-b from-white via-[#fafbfc] to-[#e6e8ec]">
        <ClipboardGroup />
        <FontGroup />
        <ParagraphGroup />
        <StylesGroup />
        <EditGroup />
      </div>
      <div className="flex min-h-0 flex-1 bg-linear-to-b from-[#b4b8bd] via-[#c9ccd1] via-[5px] to-[#c0c3c8]">
        <div className="flex shrink-0 pt-[3px] pb-px">
          <NavPane />
        </div>
        <span className="w-1 shrink-0" />
        <DocumentArea />
      </div>
      <StatusBar />
      <TaskBar />
    </div>
  );
}
